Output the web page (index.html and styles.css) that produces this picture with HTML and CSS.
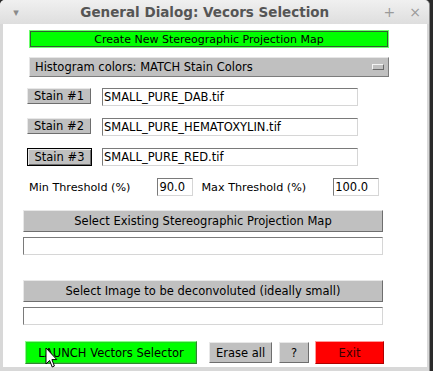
FILE: index.html
```html
<!DOCTYPE html>
<html>
<head>
<meta charset="utf-8">
<link rel="stylesheet" href="styles.css">
</head>
<body>
<div class="window">
  <div class="titlebar">
    <span class="tb-menu">▾</span>
    <span class="tb-title">General Dialog: Vecors Selection</span>
    <span class="tb-btns"><span class="tb-plus">+</span><span class="tb-close">×</span></span>
  </div>
  <div class="content">
    <div class="btn green create">Create New Stereographic Projection Map</div>
    <div class="choice"><span>Histogram colors: MATCH Stain Colors</span><span class="choice-ind"></span></div>
    <div class="stain-row first">
      <div class="btn stain">Stain #1</div>
      <div class="field wide">SMALL_PURE_DAB.tif</div>
    </div>
    <div class="stain-row">
      <div class="btn stain">Stain #2</div>
      <div class="field wide">SMALL_PURE_HEMATOXYLIN.tif</div>
    </div>
    <div class="stain-row">
      <div class="btn stain focus">Stain #3</div>
      <div class="field wide">SMALL_PURE_RED.tif</div>
    </div>
    <div class="thresh-row">
      <span class="lbl">Min Threshold (%)</span>
      <div class="field num">90.0</div>
      <span class="lbl max">Max Threshold (%)</span>
      <div class="field num num2">100.0</div>
    </div>
    <div class="btn big sel1">Select Existing Stereographic Projection Map</div>
    <div class="field full"></div>
    <div class="btn big sel2">Select Image to be deconvoluted (ideally small)</div>
    <div class="field full"></div>
    <div class="bottom-row">
      <div class="btn launch">LAUNCH Vectors Selector</div>
      <div class="btn grey erase">Erase all</div>
      <div class="btn grey help">?</div>
      <div class="btn exit">Exit</div>
    </div>
  </div>
  <svg class="cursor" width="13" height="23" viewBox="0 0 13 23"><path d="M1 1 L1 17 L4.6 13.4 L7.2 20 L9.4 19 L6.9 12.6 L11.8 12.6 Z" fill="#fff" stroke="#000" stroke-width="1"/></svg>
</div>
</body>
</html>
```

FILE: styles.css
```css
html, body {
  margin: 0;
  padding: 0;
  background: #2a2a2a;
  width: 433px;
  height: 371px;
  overflow: hidden;
}
.window {
  position: relative;
  width: 430px;
  height: 371px;
  background: #d8d8d8;
  border-radius: 5px 5px 0 0;
  box-sizing: border-box;
  border-right: 1px solid #8a8a8a;
  font-family: "DejaVu Sans", sans-serif;
  font-size: 11px;
  color: #000;
}
.titlebar {
  height: 24px;
  display: flex;
  align-items: center;
  background: linear-gradient(#f0f0f0, #dedede);
  border-radius: 5px 5px 0 0;
  position: relative;
}
.tb-menu {
  width: 32px;
  text-align: center;
  color: #8a8a8a;
  font-size: 11px;
}
.tb-title {
  flex: 1;
  text-align: center;
  font-weight: bold;
  font-size: 13.5px;
  color: #555;
  padding-right: 6px;
}
.tb-btns {
  display: flex;
  gap: 14px;
  color: #9a9a9a;
  font-size: 14px;
  padding-right: 8px;
}
.content {
  margin: 0 2px 0 3px;
  height: 343px;
  background: #fff;
  display: flex;
  flex-direction: column;
  align-items: flex-start;
  padding-left: 20px;
  box-sizing: border-box;
}
.btn {
  box-sizing: border-box;
  display: flex;
  align-items: center;
  justify-content: center;
  white-space: nowrap;
}
.green {
  background: #00ff00;
  border: 1px solid #6cff6c;
  box-shadow: inset 0 0 0 1px #2e5e2e;
}
.create {
  margin: 6px 0 0 6px;
  width: 360px;
  height: 18px;
}
.choice {
  margin: 9px 0 0 6px;
  width: 360px;
  height: 20px;
  box-sizing: border-box;
  background: #c0c0c0;
  border: 1px solid;
  border-color: #e6e6e6 #7c7c7c #7c7c7c #e6e6e6;
  display: flex;
  align-items: center;
  justify-content: space-between;
  padding: 0 4px 0 5px;
  font-size: 11.5px;
}
.choice-ind {
  width: 12px;
  height: 6px;
  box-sizing: border-box;
  border: 1px solid;
  border-color: #f4f4f4 #6a6a6a #6a6a6a #f4f4f4;
}
.stain-row {
  display: flex;
  align-items: flex-start;
  margin: 12px 0 0 4px;
}
.stain-row.first { margin-top: 11px; }
.stain {
  width: 64px;
  height: 16px;
  background: #c0c0c0;
  border: 1px solid;
  border-color: #e8e8e8 #6e6e6e #6e6e6e #e8e8e8;
  font-size: 11.5px;
}
.stain.focus {
  height: 18px;
  width: 65px;
  border: 1px solid #000;
  box-shadow: inset 1px 1px 0 #e8e8e8, inset -1px -1px 0 #6e6e6e;
}
.field {
  box-sizing: border-box;
  height: 18px;
  background: #fff;
  border: 1px solid;
  border-color: #7a7a7a #d6d6d6 #d6d6d6 #7a7a7a;
  display: flex;
  align-items: center;
  padding-left: 1px;
  font-size: 11.5px;
  white-space: nowrap;
}
.wide {
  width: 256px;
  margin-left: 11px;
}
.stain-row .focus + .wide { margin-left: 10px; }
.thresh-row {
  display: flex;
  align-items: center;
  margin: 12px 0 0 6px;
  font-size: 11.2px;
}
.lbl { white-space: nowrap; }
.num {
  width: 36px;
  margin-left: 27px;
}
.max { margin-left: 8px; }
.num2 {
  width: 46px;
  margin-left: 27px;
}
.big {
  width: 360px;
  height: 22px;
  background: #c0c0c0;
  border: 1px solid;
  border-color: #e8e8e8 #6e6e6e #6e6e6e #e8e8e8;
  font-size: 11.5px;
}
.sel1 { margin-top: 14px; }
.sel2 { margin-top: 25px; }
.full {
  width: 360px;
  margin-top: 5px;
}
.bottom-row {
  display: flex;
  margin: 16px 0 0 2px;
  align-items: flex-start;
}
.launch {
  width: 172px;
  height: 23px;
  background: #00ff00;
  border: 1px solid;
  border-color: #8aff8a #2f8a2f #2f8a2f #8aff8a;
  box-shadow: inset 0 0 0 1px #1fd81f;
  font-size: 11.5px;
}
.grey {
  background: #c0c0c0;
  border: 1px solid;
  border-color: #e8e8e8 #6e6e6e #6e6e6e #e8e8e8;
  height: 21px;
  margin-top: 1px;
  font-size: 11.5px;
}
.erase { width: 63px; margin-left: 12px; }
.help { width: 30px; margin-left: 7px; }
.exit {
  width: 69px;
  height: 23px;
  margin-left: 6px;
  background: #ff0000;
  border: 1px solid;
  border-color: #ff9a9a #b00000 #b00000 #ff9a9a;
  color: #3a0000;
  font-size: 11.5px;
}
.cursor {
  position: absolute;
  left: 45px;
  top: 347px;
}
```
